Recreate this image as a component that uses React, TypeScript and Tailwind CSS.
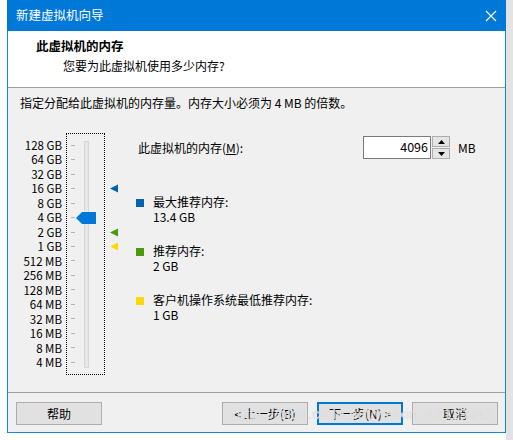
import React from "react";

const FONT = { fontFamily: '"Noto Sans CJK SC", "Noto Sans", sans-serif' };

const LEVELS = [
  "128 GB",
  "64 GB",
  "32 GB",
  "16 GB",
  "8 GB",
  "4 GB",
  "2 GB",
  "1 GB",
  "512 MB",
  "256 MB",
  "128 MB",
  "64 MB",
  "32 MB",
  "16 MB",
  "8 MB",
  "4 MB",
];

// 推荐值标记：最大推荐 16 GB，推荐 2 GB，最低 1 GB
const MARKERS: Record<number, string> = {
  3: "#0063b1",
  6: "#4a9a0b",
  7: "#fcd804",
};

const LEGEND = [
  { color: "bg-[#0063b1]", label: "最大推荐内存:", value: "13.4 GB" },
  { color: "bg-[#4a9a0b]", label: "推荐内存:", value: "2 GB" },
  { color: "bg-[#fcd804]", label: "客户机操作系统最低推荐内存:", value: "1 GB" },
];

const Triangle: React.FC<{ color: string }> = ({ color }) => (
  <svg width="9" height="9" viewBox="0 0 9 9">
    <polygon points="0,4.5 8,0.5 8,8.5" fill={color} />
  </svg>
);

const MemorySlider: React.FC = () => (
  <div className="flex">
    {/* 刻度文字 */}
    <div className="w-[54px] pt-[5px] flex flex-col text-right">
      {LEVELS.map((l) => (
        <div key={l} className="h-[14.47px] leading-[14.47px] text-[11.5px] text-black">
          {l}
        </div>
      ))}
    </div>

    {/* 滑块 */}
    <div className="ml-[4px] w-[39px] h-[242px] border border-dotted border-black relative">
      <div className="pt-[4px] pl-[4px] flex flex-col">
        {LEVELS.map((l) => (
          <div key={l} className="h-[14.47px] flex items-center">
            <div className="w-[4px] h-px bg-[#b4b4b4]" />
          </div>
        ))}
      </div>
      <div className="absolute left-[17px] top-[7px] w-[5px] h-[227px] bg-[#e7e7e7] border border-[#d6d6d6]" />
      <svg
        className="absolute left-[9px] top-[78px]"
        width="20"
        height="12"
        viewBox="0 0 20 12"
      >
        <polygon points="0,6 6,0 20,0 20,12 6,12" fill="#0078d7" />
      </svg>
    </div>

    {/* 推荐标记 */}
    <div className="ml-[5px] w-[9px] pt-[5px] flex flex-col">
      {LEVELS.map((l, i) => (
        <div key={l} className="h-[14.47px] flex items-center">
          {MARKERS[i] && <Triangle color={MARKERS[i]} />}
        </div>
      ))}
    </div>
  </div>
);

const WinButton: React.FC<{ label: string; focused?: boolean; className?: string }> = ({
  label,
  focused,
  className = "",
}) => (
  <button
    className={`w-[86px] h-[23px] bg-[#e1e1e1] text-[12px] text-black ${
      focused ? "border-2 border-[#0078d7]" : "border border-[#adadad]"
    } ${className}`}
  >
    {label}
  </button>
);

export default function App() {
  return (
    <div className="w-[513px] h-[440px] bg-white flex relative overflow-hidden" style={FONT}>
      <div className="ml-[7px] w-[499px] h-[433px] flex flex-col border-x border-b border-[#1883d7] text-[12px]">
        {/* 标题栏 */}
        <div className="h-[31px] -mx-px bg-[#0078d7] flex items-center pl-[9px] pr-[9px] text-white">
          <span className="text-[12.5px]">新建虚拟机向导</span>
          <svg className="ml-auto" width="12" height="12" viewBox="0 0 12 12">
            <path d="M1 1 L11 11 M11 1 L1 11" stroke="white" strokeWidth="1.2" />
          </svg>
        </div>

        {/* 头部 */}
        <div className="h-[57px] bg-white border-b border-[#a0a0a0] pt-[5px] pl-[28px] leading-[20px]">
          <div className="font-bold text-[12.5px]">此虚拟机的内存</div>
          <div className="pl-[27px]">您要为此虚拟机使用多少内存?</div>
        </div>

        {/* 内容 */}
        <div className="h-[304px] bg-[#f0f0f0] pt-[7px] flex flex-col">
          <div className="pl-[12px] leading-[16px]">
            指定分配给此虚拟机的内存量。内存大小必须为 4 MB 的倍数。
          </div>

          <div className="mt-[22px] flex">
            <MemorySlider />

            <div className="ml-[17px] pt-[3px] flex flex-col">
              <div className="flex items-center h-[23px]">
                <div className="w-[227px] pl-[2px]">
                  此虚拟机的内存(<span className="underline">M</span>):
                </div>
                <div className="w-[68px] h-[23px] bg-white border border-[#7a7a7a] flex items-center justify-end pr-[2px] text-[12.5px]">
                  4096
                </div>
                <div className="ml-[1px] w-[18px] h-[23px] flex flex-col">
                  <div className="h-[11px] bg-[#e5e5e5] border border-[#adadad] flex items-center justify-center">
                    <svg width="7" height="4" viewBox="0 0 7 4">
                      <polygon points="3.5,0 7,4 0,4" fill="#000" />
                    </svg>
                  </div>
                  <div className="mt-[1px] h-[11px] bg-[#e5e5e5] border border-[#adadad] flex items-center justify-center">
                    <svg width="7" height="4" viewBox="0 0 7 4">
                      <polygon points="0,0 7,0 3.5,4" fill="#000" />
                    </svg>
                  </div>
                </div>
                <div className="ml-[8px]">MB</div>
              </div>

              <div className="mt-[35px] flex flex-col gap-[19px]">
                {LEGEND.map((g) => (
                  <div key={g.label} className="flex leading-[15px]">
                    <div className={`w-[8px] h-[8px] mt-[5px] ${g.color}`} />
                    <div className="ml-[9px]">
                      <div>{g.label}</div>
                      <div>{g.value}</div>
                    </div>
                  </div>
                ))}
              </div>
            </div>
          </div>
        </div>

        {/* 底部按钮 */}
        <div className="flex-1 bg-[#f0f0f0] border-t border-[#a0a0a0] pt-[9px] pl-[8px] flex items-start">
          <WinButton label="帮助" />
          <WinButton label="< 上一步(B)" className="ml-[120px]" />
          <WinButton label="下一步(N) >" focused className="ml-[9px]" />
          <WinButton label="取消" className="ml-[9px]" />
        </div>
      </div>

      <div className="w-[7px] h-[440px] bg-[#e3e3e3]" />

      {/* 水印 */}
      <div
        className="absolute left-[232px] top-[403px] text-[15px] text-white/50 tracking-[0.2px] pointer-events-none"
        style={{ fontFamily: '"Liberation Sans", sans-serif', textShadow: "0 0 1px #c4c4c4" }}
      >
        https://blog.csdn.net/weixin_42119542
      </div>
    </div>
  );
}
